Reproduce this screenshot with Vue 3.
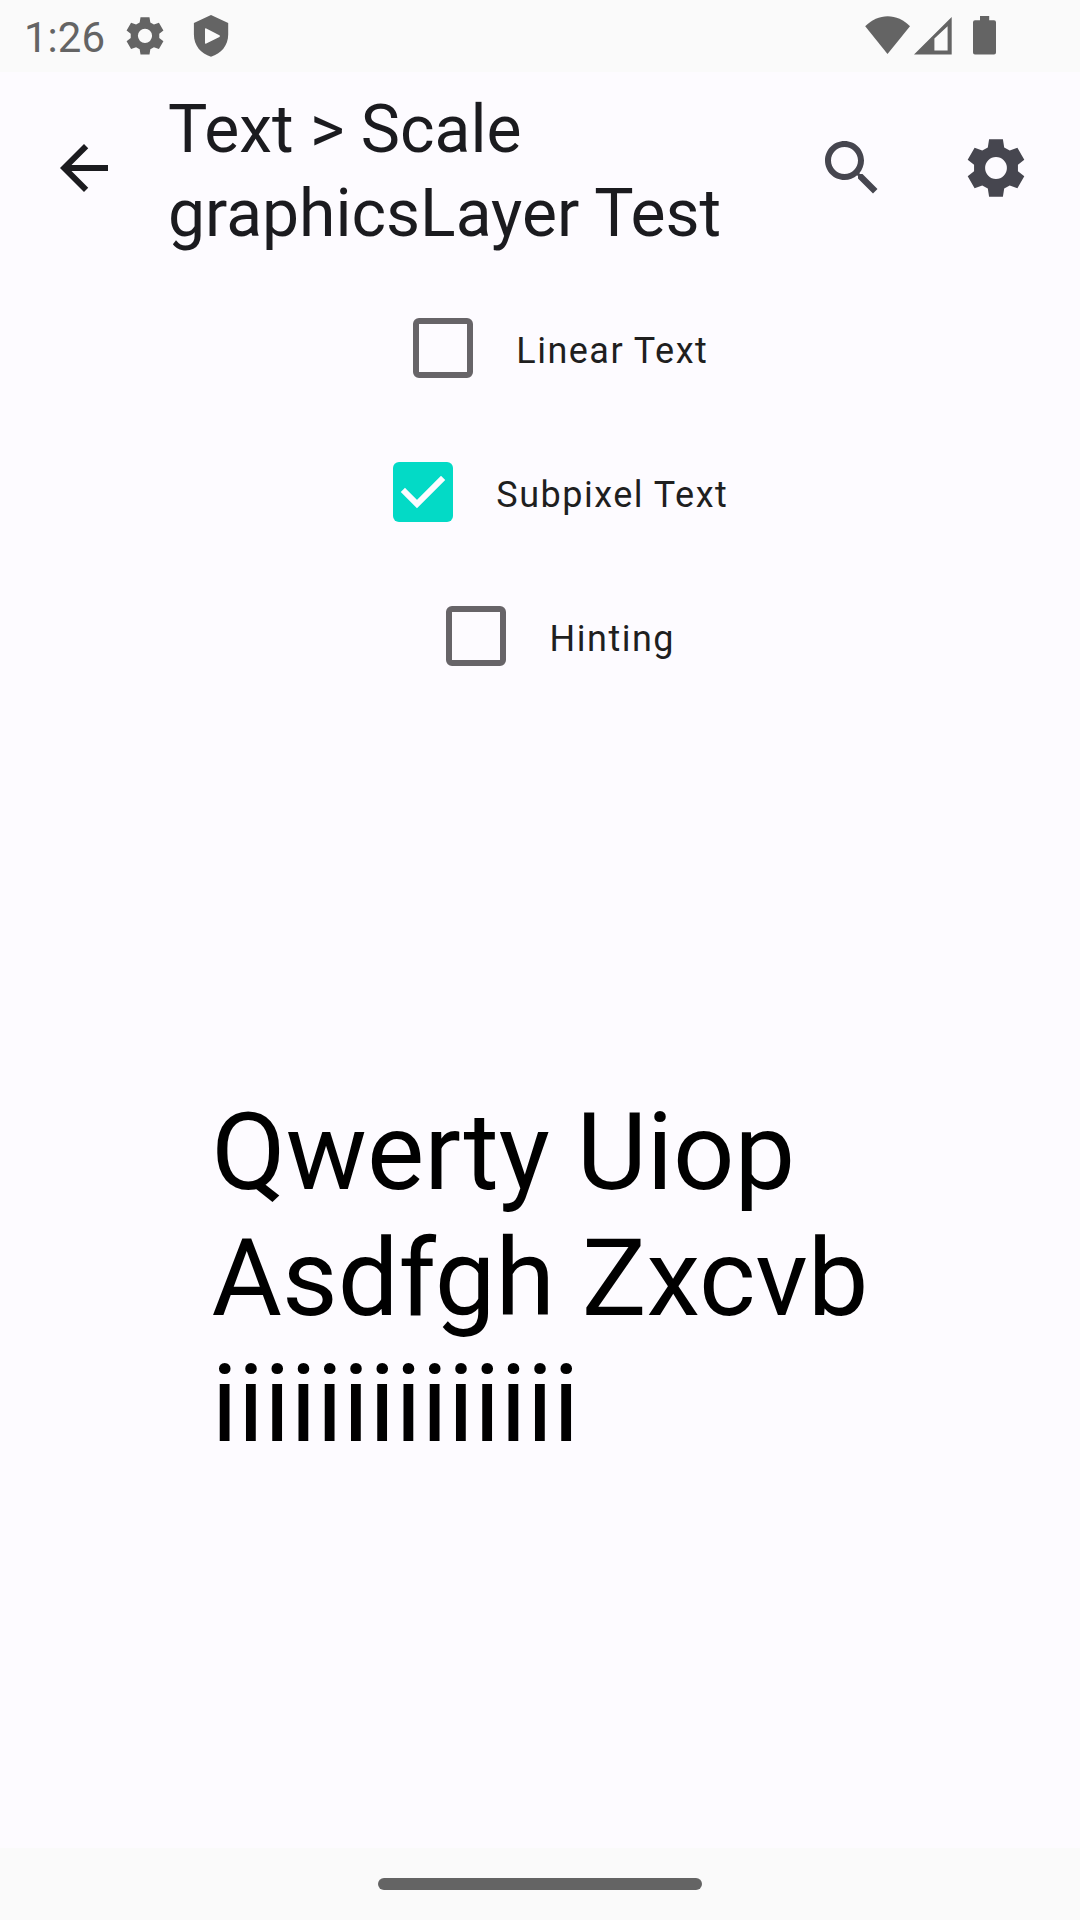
<script setup>
import { ref } from 'vue'

const options = ref([
  { label: 'Linear Text', checked: false },
  { label: 'Subpixel Text', checked: true },
  { label: 'Hinting', checked: false }
])

const tooth = [[-8.2, -20.6], [-6.9, -28.7], [6.9, -28.7], [8.2, -20.6]]
const outline = Array.from({ length: 6 }, (_, i) => {
  const a = (i * Math.PI) / 3
  return tooth.map(([x, y]) =>
    `${(x * Math.cos(a) - y * Math.sin(a)).toFixed(2)},${(x * Math.sin(a) + y * Math.cos(a)).toFixed(2)}`
  )
}).flat()
const gear = `M${outline.join('L')}ZM-10.9,0a10.9,10.9 0 1 0 21.8,0a10.9,10.9 0 1 0 -21.8,0Z`
</script>

<template>
  <div class="screen">
    <header class="status">
      <span class="clock">1:26</span>
      <svg class="status-gear" width="38" height="38" viewBox="-29.2 -29 58.4 58.4"><path :d="gear" fill-rule="evenodd" /></svg>
      <svg class="shield" width="36" height="44" viewBox="0 0 36 44">
        <path fill-rule="evenodd" d="M18 1L35.2 9V20.5C35.2 31.5 28 39.8 18 42.7C8 39.8 .9 31.5 .9 20.5V9ZM12 15.2V28.8Q12 30.2 13.3 29.5L26.4 22.9Q27.7 22.1 26.4 21.3L13.3 14.5Q12 13.8 12 15.2Z" />
      </svg>
      <div class="grow"></div>
      <svg width="46" height="40" viewBox="0 0 46 40"><path d="M.2 11.2C13-2.2 32.5-2.2 45 11.2L22.5 39Z" /></svg>
      <svg class="signal" width="38" height="40" viewBox="0 0 38 40"><path fill-rule="evenodd" d="M0 39.6L37.7 2V39.6ZM20.4 23.4V35.6H33.6V11.2Z" /></svg>
      <svg class="battery" width="23" height="39" viewBox="0 0 23 39"><path d="M7 0H16.2V4.2H21Q23 4.2 23 6.2V36.6Q23 38.6 21 38.6H2Q0 38.6 0 36.6V6.2Q0 4.2 2 4.2H7Z" /></svg>
    </header>

    <nav class="appbar">
      <svg class="back" width="72" height="72" viewBox="0 0 24 24"><path d="M20 11H7.83l5.59-5.59L12 4l-8 8 8 8 1.41-1.41L7.83 13H20z" /></svg>
      <h1>Text &gt; Scale<br />graphicsLayer Test</h1>
      <svg class="search" width="72" height="72" viewBox="0 0 24 24">
        <path d="M15.5 14h-.79l-.28-.27C15.41 12.59 16 11.11 16 9.5 16 5.91 13.09 3 9.5 3S3 5.91 3 9.5 5.91 16 9.5 16c1.61 0 3.09-.59 4.23-1.57l.27.28v.79l5 4.99L20.49 19zm-6 0C7.01 14 5 11.99 5 9.5S7.01 5 9.5 5 14 7.01 14 9.5 11.99 14 9.5 14z" />
      </svg>
      <svg class="settings" width="72" height="72" viewBox="-36 -36 72 72"><path :d="gear" fill-rule="evenodd" /></svg>
    </nav>

    <main>
      <div class="options">
        <div v-for="option in options" :key="option.label" class="option" @click="option.checked = !option.checked">
          <span class="box" :class="{ checked: option.checked }">
            <svg v-if="option.checked" width="60" height="60" viewBox="0 0 60 60"><path d="M12 30L24 42L48 18" /></svg>
          </span>
          <span class="label">{{ option.label }}</span>
        </div>
      </div>
      <div class="sample">
        <p>Qwerty Uiop<br />Asdfgh Zxcvb<br />iiiiiiiiiiiiii</p>
      </div>
    </main>

    <footer><div class="handle"></div></footer>
  </div>
</template>

<style>
body { background: #fdfbff; }
</style>

<style scoped>
.screen {
  width: 1080px;
  height: 1920px;
  display: flex;
  flex-direction: column;
  overflow: hidden;
  background: #fdfbff;
  font-family: Roboto, sans-serif;
}
svg { display: block; flex: none; }
.status {
  height: 72px;
  flex: none;
  box-sizing: border-box;
  display: flex;
  align-items: flex-start;
  padding: 15px 84px 0 24px;
  background: #fafafa;
  color: #646464;
  fill: #646464;
}
.clock {
  width: 102px;
  font-size: 42px;
  line-height: 46px;
}
.status-gear { margin-top: 2px; }
.shield { margin: -1px 0 0 29px; }
.grow { flex: 1; }
.signal { margin-left: 3px; }
.battery { margin: 1px 0 0 21px; }
.appbar {
  height: 192px;
  flex: none;
  box-sizing: border-box;
  display: flex;
  align-items: center;
  padding: 0 48px;
}
.back { fill: #1b1b1f; }
h1 {
  flex: 1;
  margin: 0 0 0 48px;
  padding-top: 8px;
  font-size: 66px;
  font-weight: 400;
  line-height: 84px;
  color: #1b1b1f;
}
.search, .settings { fill: #46464f; }
.settings { margin-left: 72px; }
main {
  flex: 1;
  display: flex;
  flex-direction: column;
}
.options { padding-top: 12px; }
.option {
  height: 144px;
  display: flex;
  align-items: center;
  justify-content: center;
}
.box {
  width: 60px;
  height: 60px;
  margin: 0 42px;
  box-sizing: border-box;
  border: 6px solid #676468;
  border-radius: 6px;
}
.box.checked {
  border: 0;
  background: #03dac6;
}
.box path {
  fill: none;
  stroke: #fdfbff;
  stroke-width: 6;
  stroke-linecap: square;
}
.label {
  font-size: 36px;
  line-height: 48px;
  letter-spacing: 1.5px;
  color: #1f1f1f;
  padding: 6px 0.6px 0 1.2px;
}
.sample {
  flex: 1;
  display: flex;
  justify-content: center;
  align-items: center;
}
.sample p {
  margin: 0;
  font-size: 108px;
  line-height: 126px;
  color: #000;
}
footer {
  height: 72px;
  flex: none;
  display: flex;
  align-items: center;
  justify-content: center;
  background: #fafafa;
}
.handle {
  width: 324px;
  height: 12px;
  border-radius: 6px;
  background: #646464;
}
</style>
